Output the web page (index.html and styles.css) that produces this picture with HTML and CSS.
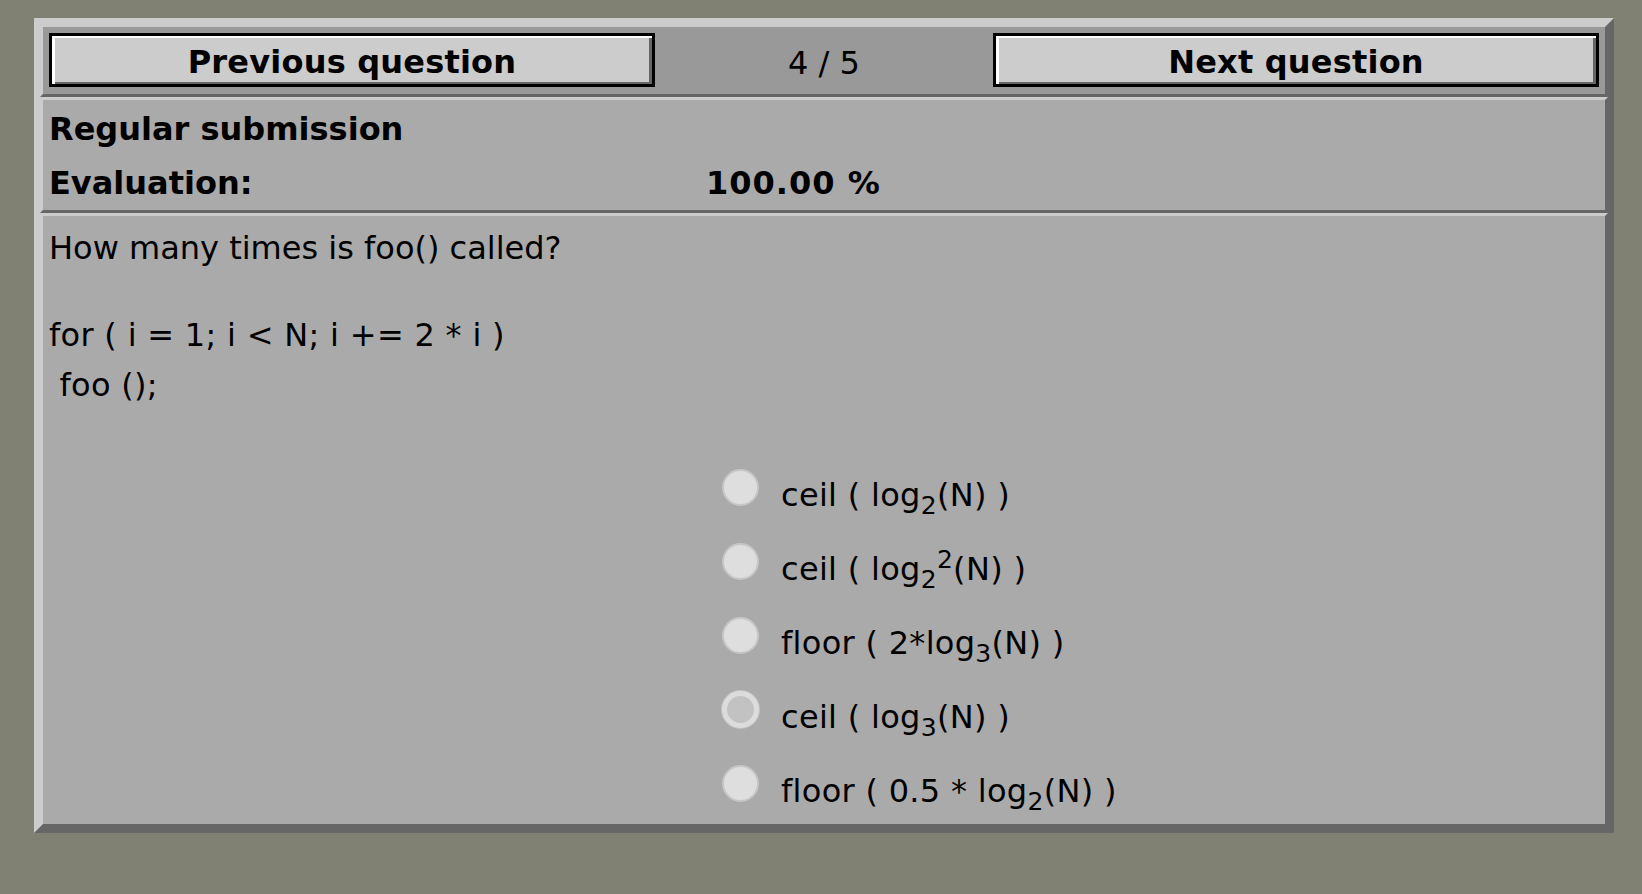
FILE: index.html
```html
<!DOCTYPE html>
<html lang="en">
<head>
<meta charset="utf-8">
<title>Question 4 / 5</title>
<link rel="stylesheet" href="styles.css">
</head>
<body class="page">
  <div class="frame">
    <div class="section nav">
      <button class="navbtn" type="button">Previous question</button>
      <div class="counter">4 / 5</div>
      <button class="navbtn" type="button">Next question</button>
    </div>
    <div class="section info">
      <div class="label">Regular submission</div>
      <div class="value"></div>
      <div class="label">Evaluation:</div>
      <div class="value">100.00 %</div>
    </div>
    <div class="section question">
      <p class="q-text">How many times is foo() called?</p>
      <div class="q-code">
        <div class="code-line">for ( i = 1; i &lt; N; i += 2 * i )</div>
        <div class="code-line">&nbsp;foo ();</div>
      </div>
      <div class="options">
        <label class="opt"><input class="radio" type="radio" name="a" disabled><span class="opt-text">ceil ( log<sub class="sub">2</sub>(N) )</span></label>
        <label class="opt"><input class="radio" type="radio" name="a" disabled><span class="opt-text">ceil ( log<sub class="sub">2</sub><sup class="sup">2</sup>(N) )</span></label>
        <label class="opt"><input class="radio" type="radio" name="a" disabled><span class="opt-text">floor ( 2*log<sub class="sub">3</sub>(N) )</span></label>
        <label class="opt"><input class="radio" type="radio" name="a" checked disabled><span class="opt-text">ceil ( log<sub class="sub">3</sub>(N) )</span></label>
        <label class="opt"><input class="radio" type="radio" name="a" disabled><span class="opt-text">floor ( 0.5 * log<sub class="sub">2</sub>(N) )</span></label>
      </div>
    </div>
  </div>
</body>
</html>
```
FILE: styles.css
```css
* { box-sizing: border-box; }

html, body { margin: 0; padding: 0; }

.page {
  background: #808073;
  font-family: "DejaVu Sans", Verdana, sans-serif;
  font-size: 32px;
  color: #000;
  padding: 18px 0 0 34px;
  min-height: 894px;
}

.frame {
  width: 1580px;
  border: 6px solid;
  border-color: #cccccc #666666 #666666 #cccccc;
  background: #aaaaaa;
}

.section {
  border: 3px solid;
  border-color: #cccccc #666666 #666666 #cccccc;
  background: #aaaaaa;
}

.nav {
  background: #999999;
  display: grid;
  grid-template-columns: 606px 1fr 606px;
  align-items: start;
  padding: 6px 6px 7px 6px;
}

.navbtn {
  height: 54px;
  margin: 0;
  padding: 3px 0 0 0;
  border: 3px solid #000;
  background: #cccccc;
  box-shadow: inset 3px 2px 0 0 #ffffff, inset -3px -2px 0 0 #666666;
  font-family: "DejaVu Sans", Verdana, sans-serif;
  font-weight: bold;
  font-size: 32px;
  line-height: 42px;
  color: #000;
  text-align: center;
  letter-spacing: 0.2px;
}

.counter {
  height: 54px;
  padding-top: 3px;
  line-height: 54px;
  text-align: center;
}

.info {
  display: grid;
  grid-template-columns: 657px 1fr;
  padding: 2px 6px 0 6px;
  font-weight: bold;
  line-height: 54px;
}

.value {
  letter-spacing: 1px;
}

.question {
  padding: 7px 6px 1px 6px;
}

.q-text {
  margin: 0;
  line-height: 50px;
}

.q-code {
  margin-top: 37px;
  line-height: 50px;
  letter-spacing: 0.3px;
}

.options {
  margin: 53px 0 0 673px;
  display: flex;
  flex-direction: column;
  gap: 10px;
}

.opt {
  display: flex;
  align-items: flex-start;
  height: 64px;
}

.radio {
  appearance: none;
  -webkit-appearance: none;
  width: 37px;
  height: 37px;
  margin: 6px 22px 0 0;
  border-radius: 50%;
  background: #dedede;
  border: 2px solid #c6c6c6;
  flex: none;
}

.radio:checked {
  background: #c2c2c2;
  border: 5px solid #dcdcdc;
  box-shadow: 0 0 0 1px #c4c4c4;
}

.opt-text {
  line-height: 64px;
  white-space: nowrap;
  letter-spacing: 0.3px;
}

.sub {
  font-size: 25px;
  line-height: 0;
  vertical-align: -8px;
}

.sup {
  font-size: 25px;
  line-height: 0;
  vertical-align: 12px;
}
```
